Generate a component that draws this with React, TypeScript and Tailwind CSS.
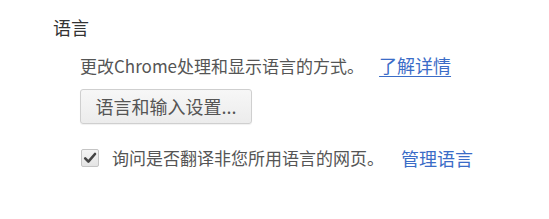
import React, { useState } from "react";

const FONT = { fontFamily: '"Noto Sans CJK SC", "Noto Sans", sans-serif' };

export default function App() {
  const [ask, setAsk] = useState(true);

  return (
    <div className="w-[549px] h-[219px] bg-white overflow-hidden" style={FONT}>
      <div className="pl-[53px] pt-[15px]">
        <h3 className="text-[18px] leading-[24px] text-[#333] font-normal">语言</h3>

        <div className="pl-[27px] mt-[14px] flex flex-col items-start">
          <p className="text-[17px] leading-[24px] text-[#555] whitespace-nowrap">
            更改Chrome处理和显示语言的方式。
            <a href="#" className="ml-[15px] text-[18px] text-[#3b6cc7] underline underline-offset-[3px]">
              了解详情
            </a>
          </p>

          <button
            type="button"
            className="mt-[11px] h-[35px] w-[172px] rounded-[3px] border border-[#cfcfcf] bg-gradient-to-b from-[#f7f7f7] to-[#ececec] text-[18px] text-[#555] shadow-[0_1px_1px_rgba(0,0,0,0.06)]"
          >
            语言和输入设置...
          </button>

          <label className="mt-[22px] flex items-center h-[24px] text-[17px] text-[#555] whitespace-nowrap">
            <span
              onClick={() => setAsk(!ask)}
              className="mr-[13px] ml-[1px] w-[18px] h-[18px] rounded-[2px] border border-[#c4c4c4] bg-gradient-to-b from-[#f4f4f4] to-[#e4e4e4] flex items-center justify-center"
            >
              {ask && (
                <svg width="14" height="14" viewBox="0 0 14 14">
                  <path d="M2.2 7.4 L5.4 10.6 L12 3" fill="none" stroke="#444" strokeWidth="2.6" strokeLinecap="round" strokeLinejoin="round" />
                </svg>
              )}
            </span>
            询问是否翻译非您所用语言的网页。
            <a href="#" className="ml-[17px] text-[18px] text-[#3b6cc7]">
              管理语言
            </a>
          </label>
        </div>
      </div>
    </div>
  );
}
